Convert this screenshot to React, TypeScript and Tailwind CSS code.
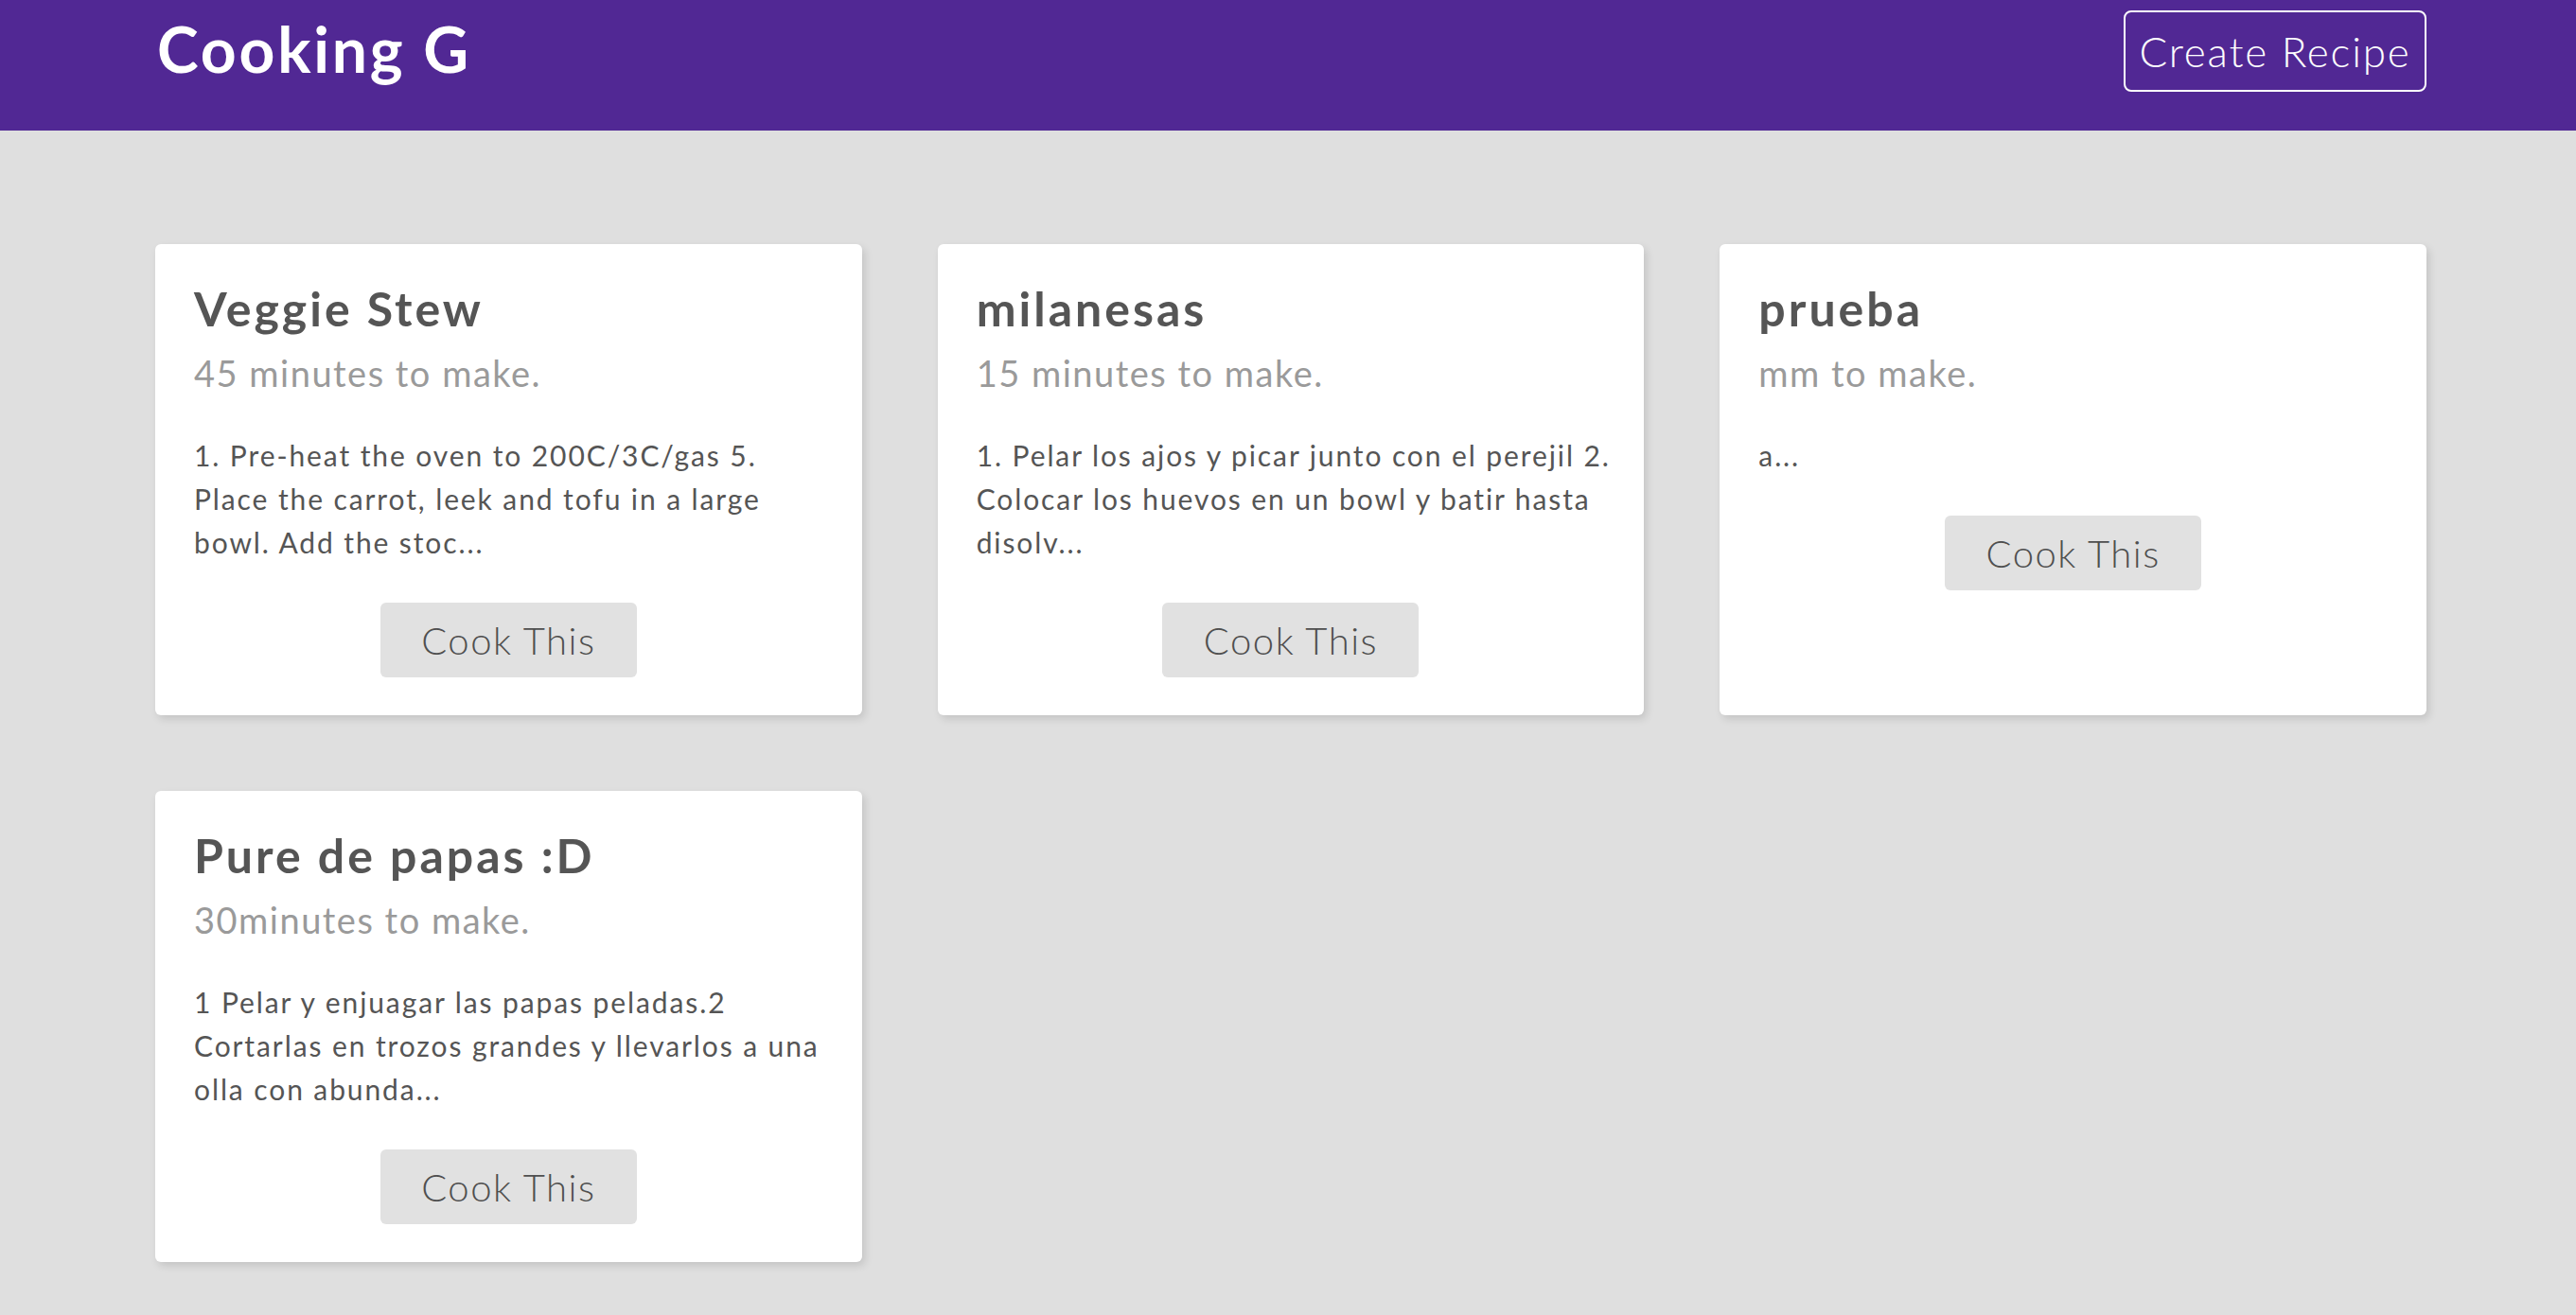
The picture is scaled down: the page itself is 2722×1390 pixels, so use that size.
type Recipe = {
  title: string;
  time: string;
  lines: string[];
};

const recipes: Recipe[] = [
  {
    title: 'Veggie Stew',
    time: '45 minutes to make.',
    lines: [
      '1. Pre-heat the oven to 200C/3C/gas 5.',
      'Place the carrot, leek and tofu in a large',
      'bowl. Add the stoc...',
    ],
  },
  {
    title: 'milanesas',
    time: '15 minutes to make.',
    lines: [
      '1. Pelar los ajos y picar junto con el perejil 2.',
      'Colocar los huevos en un bowl y batir hasta',
      'disolv...',
    ],
  },
  {
    title: 'prueba',
    time: 'mm to make.',
    lines: ['a...'],
  },
  {
    title: 'Pure de papas :D',
    time: '30minutes to make.',
    lines: [
      '1 Pelar y enjuagar las papas peladas.2',
      'Cortarlas en trozos grandes y llevarlos a una',
      'olla con abunda...',
    ],
  },
];

function RecipeCard({ recipe }: { recipe: Recipe }) {
  return (
    <div className="flex flex-col rounded-md bg-white px-[41px] pt-[38px] pb-[40px] shadow-[3px_4px_8px_rgba(0,0,0,0.12)]">
      <h2 className="text-[50px] leading-[60px] font-bold tracking-[3px] text-[#555]">
        {recipe.title}
      </h2>
      <p className="mt-[15px] text-[38px] leading-[46px] tracking-[1.5px] text-[#9a9a9a]">
        {recipe.time}
      </p>
      <p className="mt-[41px] text-[30px] leading-[46px] tracking-[1.9px] text-[#555]">
        {recipe.lines.map((line) => (
          <span key={line} className="block whitespace-nowrap">
            {line}
          </span>
        ))}
      </p>
      <div className="mt-[41px] flex justify-center">
        <button className="h-[79px] w-[271px] rounded-md bg-[#e1e1e1] text-[40px] font-light tracking-[1.5px] text-[#4f4f4f]">
          Cook This
        </button>
      </div>
    </div>
  );
}

export default function App() {
  return (
    <div className="min-h-screen bg-[#dfdfdf] font-['Lato',sans-serif]">
      <header className="h-[138px] bg-[#512894]">
        <div className="ml-[164px] flex w-[2400px] items-start justify-between">
          <h1 className="mt-[12px] ml-[2px] text-[66px] leading-[80px] font-bold tracking-[2.8px] text-white">
            Cooking G
          </h1>
          <button className="mt-[11px] h-[86px] w-[320px] rounded-lg border-2 border-white text-[44px] font-light tracking-[1.8px] text-white">
            Create Recipe
          </button>
        </div>
      </header>
      <main className="ml-[164px] grid w-[2400px] grid-cols-3 gap-[80px] pt-[120px] pb-[56px]">
        {recipes.map((recipe) => (
          <RecipeCard key={recipe.title} recipe={recipe} />
        ))}
      </main>
    </div>
  );
}
